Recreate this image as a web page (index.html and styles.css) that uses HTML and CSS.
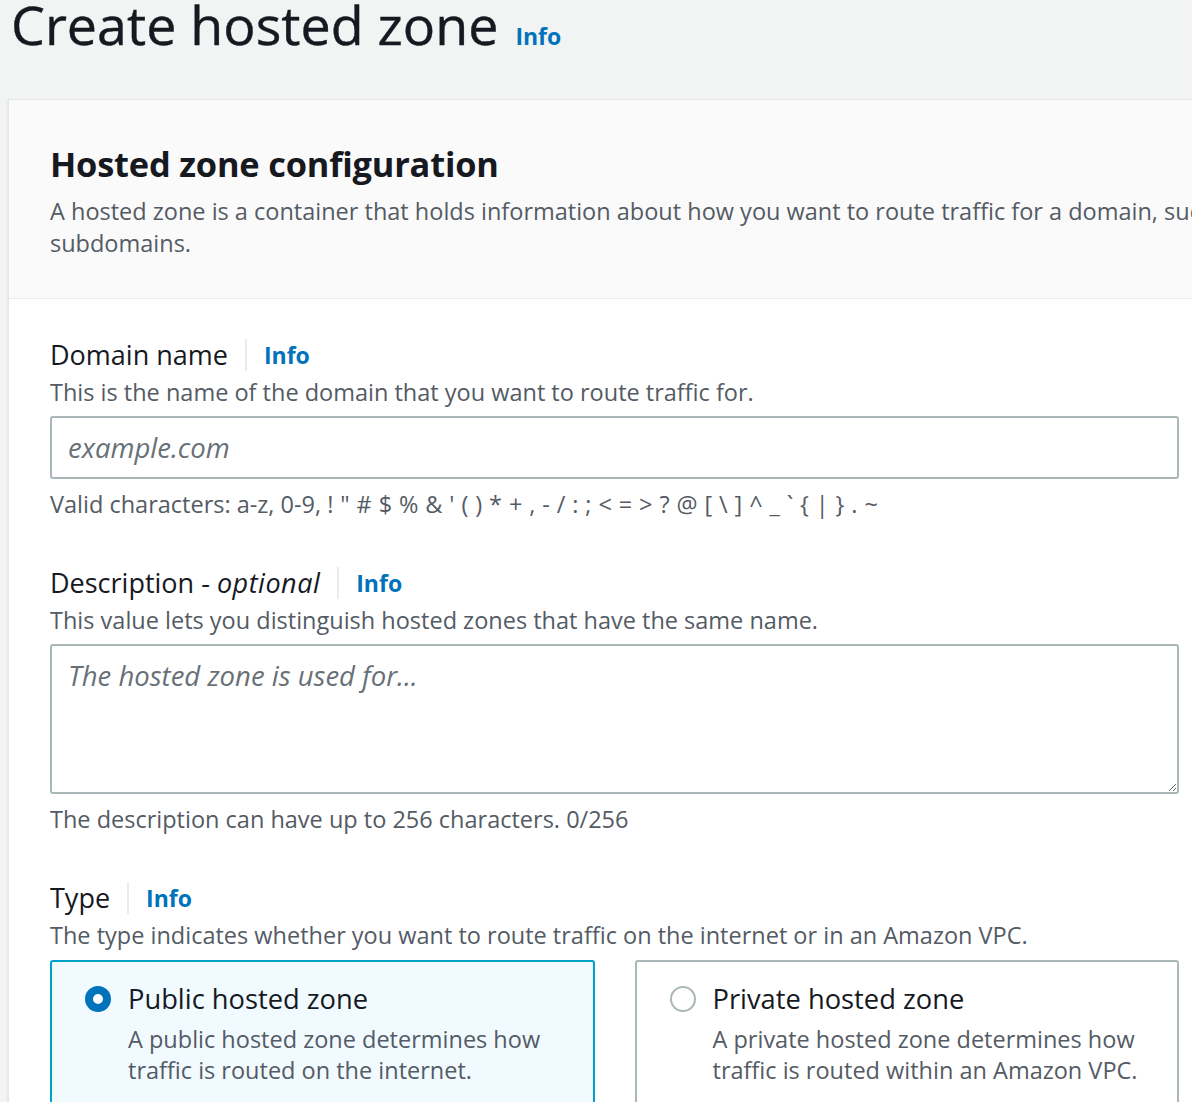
FILE: index.html
```html
<!DOCTYPE html>
<html lang="en">
<head>
<meta charset="utf-8">
<title>Create hosted zone</title>
<link rel="stylesheet" href="styles.css">
</head>
<body>
<div class="page">
  <header class="page-header">
    <h1 class="page-title">Create hosted zone</h1>
    <a class="info-link" href="#">Info</a>
  </header>

  <section class="panel">
    <div class="panel-head">
      <h2 class="panel-title">Hosted zone configuration</h2>
      <p class="panel-desc">A hosted zone is a container that holds information about how you want to route traffic for a domain, such as example.com, and its<br>subdomains.</p>
    </div>

    <div class="panel-body">
      <div class="field">
        <div class="label-row">
          <label class="label" for="domain">Domain name</label>
          <span class="sep"></span>
          <a class="info-link" href="#">Info</a>
        </div>
        <p class="field-desc">This is the name of the domain that you want to route traffic for.</p>
        <input class="input" id="domain" type="text" placeholder="example.com">
        <p class="constraint">Valid characters: a-z, 0-9, <span class="chars">! " # $ % &amp; ' ( ) * + , - / : ; &lt; = &gt; ? @ [ \ ] ^ _ ` { | } . ~</span></p>
      </div>

      <div class="field">
        <div class="label-row">
          <label class="label" for="desc">Description - <em>optional</em></label>
          <span class="sep"></span>
          <a class="info-link" href="#">Info</a>
        </div>
        <p class="field-desc">This value lets you distinguish hosted zones that have the same name.</p>
        <textarea class="textarea" id="desc" placeholder="The hosted zone is used for..."></textarea>
        <p class="constraint">The description can have up to 256 characters. 0/256</p>
      </div>

      <div class="field">
        <div class="label-row">
          <span class="label">Type</span>
          <span class="sep"></span>
          <a class="info-link" href="#">Info</a>
        </div>
        <p class="field-desc">The type indicates whether you want to route traffic on the internet or in an Amazon VPC.</p>
        <div class="tiles">
          <div class="tile tile-selected">
            <span class="radio radio-on"></span>
            <div class="tile-text">
              <div class="tile-title">Public hosted zone</div>
              <div class="tile-desc">A public hosted zone determines how traffic is routed on the internet.</div>
            </div>
          </div>
          <div class="tile">
            <span class="radio"></span>
            <div class="tile-text">
              <div class="tile-title">Private hosted zone</div>
              <div class="tile-desc">A private hosted zone determines how traffic is routed within an Amazon VPC.</div>
            </div>
          </div>
        </div>
      </div>
    </div>
  </section>
</div>
</body>
</html>
```

FILE: styles.css
```css
* { box-sizing: border-box; }

html, body {
  margin: 0;
  padding: 0;
  background: #f2f3f3;
  overflow: hidden;
}

body {
  font-family: "Open Sans", "Noto Sans", sans-serif;
  color: #16191f;
  font-size: 23.5px;
  line-height: 32px;
}

p { margin: 0; }

.page {
  width: 1700px;
}

.page-header {
  display: flex;
  align-items: baseline;
  gap: 17px;
  padding-left: 11px;
  margin-top: -3px;
  height: 54px;
}

.page-title {
  margin: 0;
  font-size: 53.8px;
  line-height: 54px;
  font-weight: 400;
  color: #16191f;
  -webkit-text-stroke: 0.4px #16191f;
}

.info-link {
  font-weight: 700;
  font-size: 23px;
  color: #0073bb;
  text-decoration: none;
}

.panel {
  margin-top: 49px;
  margin-left: 9px;
  width: 1600px;
  background: #fff;
  box-shadow: 0 0 0 1px #e4e7e7, -1px 1px 2px rgba(0, 28, 36, 0.12);
}

.panel-head {
  background: #fafafa;
  border-bottom: 1px solid #eaeded;
  padding: 42px 41px 39px;
}

.panel-title {
  margin: 0;
  font-size: 34.4px;
  line-height: 44px;
  font-weight: 700;
  letter-spacing: -0.2px;
}

.panel-desc {
  margin-top: 9px;
  color: #545b64;
}

.panel-body {
  padding: 40px 41px;
  width: 1211px;
}

.field + .field { margin-top: 47px; }

.label-row {
  display: flex;
  align-items: center;
  height: 32px;
}

.label {
  font-size: 27px;
  line-height: 32px;
  color: #16191f;
}

.label em {
  font-style: italic;
  letter-spacing: 0.5px;
}

.sep {
  width: 2px;
  height: 32px;
  background: #eaeded;
  margin: 0 17px;
}

.field-desc {
  margin-top: 5px;
  color: #545b64;
}

.input,
.textarea {
  display: block;
  width: 100%;
  margin-top: 8px;
  border: 2px solid #aab7b8;
  border-radius: 3px;
  background: #fff;
  font-family: "Open Sans", "Noto Sans", sans-serif;
  font-size: 27.5px;
  color: #16191f;
  outline: none;
}

.input {
  height: 63px;
  padding: 0 16px;
}

.textarea {
  height: 150px;
  padding: 12px 16px;
  line-height: 36px;
  resize: both;
}

.input::placeholder,
.textarea::placeholder {
  color: #687078;
  font-style: italic;
}

.constraint {
  margin-top: 9px;
  color: #545b64;
}

.chars {
  word-spacing: 0.8px;
}

.tiles {
  margin-top: 9px;
  display: grid;
  grid-template-columns: 1fr 1fr;
  gap: 40px;
}

.tile {
  display: flex;
  align-items: flex-start;
  gap: 17px;
  min-height: 180px;
  padding: 21px 33px;
  border: 2px solid #aab7b8;
  border-radius: 3px;
  background: #fff;
}

.tile-selected {
  border-color: #00a1c9;
  background: #f1faff;
}

.radio {
  flex: none;
  width: 26px;
  height: 26px;
  margin-top: 3px;
  border-radius: 50%;
  border: 2px solid #aab7b8;
  background: #fff;
}

.radio-on {
  border: 8px solid #0073bb;
  background: #fff;
}

.tile-title {
  font-size: 27.3px;
  line-height: 32px;
  color: #16191f;
}

.tile-desc {
  margin-top: 9px;
  color: #545b64;
  line-height: 31px;
}
```
